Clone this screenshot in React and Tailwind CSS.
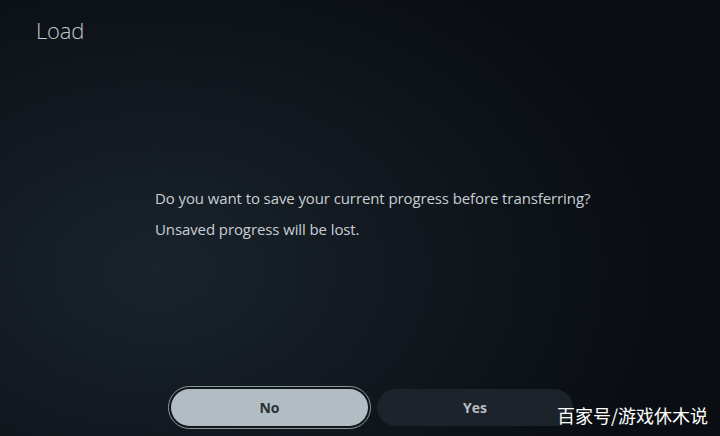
import React from "react";

// Save-before-transfer confirmation dialog
export default function App() {
  return (
    <div
      className="relative flex h-[436px] w-[720px] flex-col overflow-hidden bg-[radial-gradient(ellipse_70%_80%_at_22%_62%,#1a232c_0%,#121920_45%,#0a0e13_100%)] text-[#c9ced3]"
      style={{ fontFamily: '"Open Sans", "Noto Sans", "Noto Sans CJK SC", sans-serif' }}
    >
      {/* Title */}
      <h1 className="pl-[36px] pt-[15px] text-[22px] font-light leading-[30px] tracking-[-0.2px] text-[#c3c8cd]">
        Load
      </h1>

      {/* Message */}
      <div className="mt-[143px] flex flex-col gap-[11px] pl-[155px] text-[15px] leading-[20px] tracking-[-0.1px]">
        <p>Do you want to save your current progress before transferring?</p>
        <p>Unsaved progress will be lost.</p>
      </div>

      {/* Buttons */}
      <div className="mt-auto mb-[7px] flex items-center gap-[6px] pl-[168px]">
        <button className="flex h-[43px] w-[203px] items-center justify-center rounded-full border border-[#8f989f] bg-[#11161b] p-[2px]">
          <span className="flex h-full w-full items-center justify-center rounded-full bg-[#b1bcc3] text-[14px] font-bold text-[#2a3036]">
            No
          </span>
        </button>
        <button className="flex h-[37px] w-[196px] items-center justify-center rounded-full bg-[#1c232a] text-[14px] font-bold text-[#b7bec4]">
          Yes
        </button>
      </div>

      {/* Watermark */}
      <span
        className="absolute bottom-[10px] right-[12px] text-[18px] leading-[22px] text-white"
        style={{ fontFamily: '"Noto Sans CJK SC", sans-serif' }}
      >
        百家号/游戏休木说
      </span>
    </div>
  );
}
